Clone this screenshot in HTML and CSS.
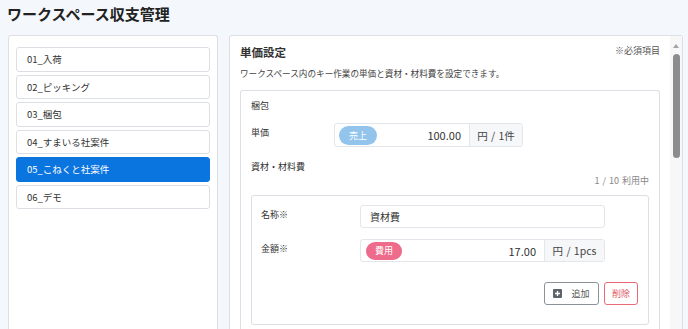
FILE: index.html
```html
<!DOCTYPE html>
<html lang="ja">
<head>
    <meta charset="UTF-8">
    <meta name="viewport" content="width=device-width, initial-scale=1.0">
    <title>ワークスペース収支管理</title>
    <link rel="stylesheet" href="styles.css">
</head>
<body>
    <h1 class="page-title">ワークスペース収支管理</h1>

    <div class="layout">
        <aside class="side-panel">
            <ul class="ws-list">
                <li class="ws-item">01_入荷</li>
                <li class="ws-item">02_ピッキング</li>
                <li class="ws-item">03_梱包</li>
                <li class="ws-item">04_すまいる社案件</li>
                <li class="ws-item active">05_こねくと社案件</li>
                <li class="ws-item">06_デモ</li>
            </ul>
        </aside>

        <section class="main-panel">
            <div class="main-content">
                <div class="section-head">
                    <h2>単価設定</h2>
                    <span class="required-note">※必須項目</span>
                </div>
                <p class="section-desc">ワークスペース内のキー作業の単価と資材・材料費を設定できます。</p>

                <div class="task-box">
                    <div class="task-name">梱包</div>

                    <div class="form-row">
                        <label class="row-label label-unit">単価</label>
                        <div class="price-group unit-price">
                            <div class="price-main">
                                <span class="badge badge-sales">売上</span>
                                <span class="price-value">100.00</span>
                            </div>
                            <div class="price-unit">円 / 1件</div>
                        </div>
                    </div>

                    <div class="materials-title">資材・材料費</div>
                    <div class="materials-count">1 / 10 利用中</div>

                    <div class="material-card">
                        <div class="form-row">
                            <label class="row-label label-card">名称※</label>
                            <div class="text-input">資材費</div>
                        </div>
                        <div class="form-row row-amount">
                            <label class="row-label label-card">金額※</label>
                            <div class="price-group amount-price">
                                <div class="price-main">
                                    <span class="badge badge-cost">費用</span>
                                    <span class="price-value">17.00</span>
                                </div>
                                <div class="price-unit">円 / 1pcs</div>
                            </div>
                        </div>
                        <div class="card-actions">
                            <button class="btn btn-add">
                                <svg width="9" height="9" viewBox="0 0 9 9">
                                    <rect width="9" height="9" rx="1" fill="#5c636a"/>
                                    <path d="M4.5 2v5M2 4.5h5" stroke="#fff" stroke-width="1.4"/>
                                </svg>
                                追加
                            </button>
                            <button class="btn btn-delete">削除</button>
                        </div>
                    </div>
                </div>
            </div>

            <div class="scrollbar">
                <span class="scroll-arrow"></span>
                <span class="scroll-thumb"></span>
            </div>
        </section>
    </div>
</body>
</html>
```

FILE: styles.css
```css
* {
    margin: 0;
    padding: 0;
    box-sizing: border-box;
}

html, body {
    height: 100%;
    overflow: hidden;
}

body {
    font-family: "Noto Sans CJK JP", "Noto Sans", sans-serif;
    background: #f4f8fc;
    color: #333;
    padding: 0 5px 0 8px;
    display: flex;
    flex-direction: column;
}

.page-title {
    font-size: 15px;
    font-weight: 700;
    line-height: 20px;
    padding-top: 4px;
    margin-left: -1px;
    color: #222;
}

.layout {
    flex: 1;
    min-height: 0;
    display: grid;
    grid-template-columns: 210px 454px;
    gap: 11px;
    margin-top: 11px;
}

/* left column - runs on below the window, so no bottom edge */
.side-panel {
    background: #fff;
    border: 1px solid #dcdfe3;
    border-bottom: none;
    border-radius: 3px 3px 0 0;
    padding: 11px 7px;
}

.ws-list {
    list-style: none;
    display: flex;
    flex-direction: column;
    gap: 3px;
}

.ws-item {
    height: 24.5px;
    line-height: 22px;
    padding-left: 10px;
    font-size: 9.5px;
    border: 1px solid #dcdfe3;
    border-radius: 3px;
    color: #333;
}

.ws-item.active {
    background: #0a74df;
    border-color: #0a74df;
    color: #fff;
}

/* right column */
.main-panel {
    background: #fff;
    border: 1px solid #dcdfe3;
    border-bottom: none;
    border-radius: 3px 3px 0 0;
    display: flex;
    min-height: 0;
}

.main-content {
    flex: 1;
    display: flex;
    flex-direction: column;
    padding: 8px 10px 0 10px;
}

.section-head {
    display: flex;
    justify-content: space-between;
    align-items: flex-start;
}

.section-head h2 {
    font-size: 11.5px;
    font-weight: 700;
    line-height: 16px;
}

.required-note {
    font-size: 9px;
    line-height: 12px;
    margin-top: 1px;
    color: #555;
}

.section-desc {
    font-size: 8.6px;
    line-height: 14px;
    margin-top: 6px;
    color: #444;
}

.task-box {
    flex: 1;
    margin-top: 10px;
    border: 1px solid #dcdfe3;
    border-bottom: none;
    border-radius: 3px 3px 0 0;
    padding: 8px 10px 0 10px;
}

.task-name,
.materials-title,
.row-label {
    font-size: 9px;
    line-height: 14px;
}

.form-row {
    display: flex;
    align-items: flex-start;
    margin-top: 10px;
}

.row-label {
    padding-top: 3px;
}

.label-unit {
    width: 83px;
}

.label-card {
    width: 99px;
}

.price-group {
    display: flex;
    border: 1px solid #e3e6ea;
    border-radius: 3px;
    overflow: hidden;
}

.unit-price {
    width: 189px;
    height: 24px;
}

.amount-price {
    width: 245px;
    height: 23px;
}

.price-main {
    flex: 1;
    display: flex;
    align-items: center;
    justify-content: space-between;
    padding: 0 8px 0 4px;
}

.amount-price .price-main {
    padding-left: 5px;
}

.price-value {
    font-size: 11px;
}

.price-unit {
    display: flex;
    align-items: center;
    justify-content: center;
    background: #f6f7f9;
    border-left: 1px solid #e3e6ea;
    font-size: 10.5px;
    color: #444;
    word-spacing: 1px;
}

.unit-price .price-unit {
    width: 53px;
}

.amount-price .price-unit {
    width: 60px;
}

.badge {
    display: inline-flex;
    align-items: center;
    justify-content: center;
    color: #fff;
    font-size: 9px;
    border-radius: 10px;
}

.badge-sales {
    background: #92c4ec;
    width: 38px;
    height: 19px;
}

.badge-cost {
    background: #ef6b8b;
    width: 36px;
    height: 18px;
}

.materials-title {
    margin-top: 13px;
}

.materials-count {
    text-align: right;
    font-size: 9px;
    line-height: 14px;
    color: #888;
    word-spacing: 1px;
}

.material-card {
    margin-top: 7px;
    width: 398px;
    border: 1px solid #dcdfe3;
    border-radius: 3px;
    padding: 9px 10px 19px 9px;
}

.material-card .form-row:first-child {
    margin-top: 0;
}

.row-amount {
    margin-top: 11px;
}

.text-input {
    width: 245px;
    height: 23px;
    border: 1px solid #e3e6ea;
    border-radius: 3px;
    padding-left: 9px;
    font-size: 10px;
    line-height: 21px;
    color: #333;
}

.card-actions {
    display: flex;
    justify-content: flex-end;
    gap: 5px;
    margin-top: 20px;
}

.btn {
    display: inline-flex;
    align-items: center;
    justify-content: center;
    height: 23px;
    font-family: inherit;
    font-size: 9px;
    background: #fff;
    border-radius: 3px;
    cursor: pointer;
}

.btn-add {
    width: 55px;
    gap: 9px;
    border: 1px solid #8b929a;
    color: #555;
}

.btn-delete {
    width: 34px;
    border: 1px solid #ea6a78;
    color: #e25563;
}

/* scrollbar column */
.scrollbar {
    width: 12px;
    background: #f7f7f7;
    display: flex;
    flex-direction: column;
    align-items: center;
    padding-top: 8px;
}

.scroll-arrow {
    width: 0;
    height: 0;
    border-left: 3.5px solid transparent;
    border-right: 3.5px solid transparent;
    border-bottom: 4px solid #a3a3a3;
}

.scroll-thumb {
    width: 7px;
    height: 104px;
    margin-top: 6px;
    background: #8c8c8c;
    border-radius: 4px;
}
```
